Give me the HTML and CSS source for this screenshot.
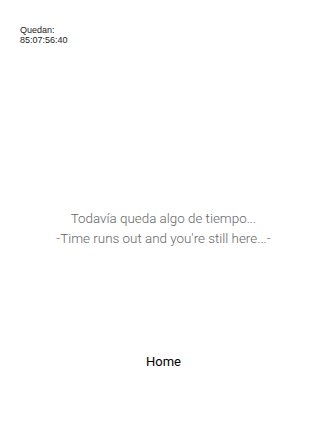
FILE: index.html
```html
<!DOCTYPE html>
<html>
<head>
<meta charset="utf-8">
<link rel="stylesheet" href="styles.css">
</head>
<body>
<div class="page">
  <div class="timer">Quedan:<br>85:07:56:40</div>
  <div class="message">
    <p>Todavía queda algo de tiempo...</p>
    <p>-Time runs out and you're still here...-</p>
  </div>
  <div class="home">Home</div>
</div>
</body>
</html>
```
FILE: styles.css
```css
html, body {
  margin: 0;
  padding: 0;
  background: #fff;
}
.page {
  width: 327px;
  height: 434px;
  display: flex;
  flex-direction: column;
}
.timer {
  font-family: "Liberation Sans", Arial, sans-serif;
  font-size: 9px;
  line-height: 10px;
  color: #222;
  padding: 25px 0 0 20px;
}
.message {
  margin-top: 164px;
  text-align: center;
  font-family: Roboto, sans-serif;
  font-weight: 300;
  font-size: 13.4px;
  line-height: 20px;
  color: #666;
}
.message p {
  margin: 0;
}
.home {
  margin-top: 105px;
  text-align: center;
  font-family: Roboto, sans-serif;
  font-size: 13px;
  color: #000;
}
```
